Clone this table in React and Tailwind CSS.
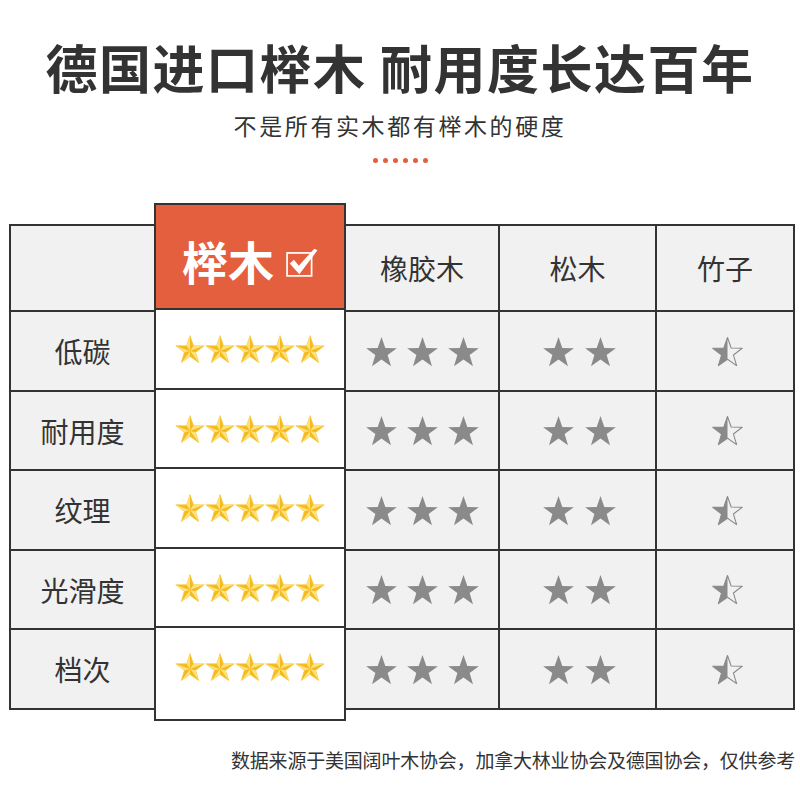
// App.jsx — beech wood comparison chart

const FONT = { fontFamily: '"Noto Sans CJK SC", "Noto Sans", sans-serif' }

const OUTER = [
  [50, 0],
  [97.55, 34.55],
  [79.39, 90.45],
  [20.61, 90.45],
  [2.45, 34.55],
]
const INNER = [
  [61.76, 33.82],
  [69.02, 56.18],
  [50, 70],
  [30.98, 56.18],
  [38.24, 33.82],
]
const STAR_POINTS = OUTER.flatMap((p, i) => [p, INNER[i]])
  .map(p => p.join(','))
  .join(' ')

function GoldStar() {
  const c = [50, 52]
  return (
    <svg viewBox="0 -4 100 98" className="w-[30px] h-[30px]">
      <polygon points={STAR_POINTS} fill="#f7c230" />
      {OUTER.map((o, i) => {
        const left = INNER[(i + 4) % 5]
        const right = INNER[i]
        return (
          <g key={i}>
            <polygon points={`${c.join(',')} ${left.join(',')} ${o.join(',')}`} fill="#fde37c" />
            <polygon points={`${c.join(',')} ${o.join(',')} ${right.join(',')}`} fill="#f5b921" />
          </g>
        )
      })}
      <polygon points={STAR_POINTS} fill="none" stroke="#fcd45a" strokeWidth="2" strokeLinejoin="round" />
    </svg>
  )
}

function GreyStar() {
  return (
    <svg viewBox="0 -3 100 96" className="w-[33px] h-[31px]">
      <polygon points={STAR_POINTS} fill="#8a8a8a" />
    </svg>
  )
}

function HalfStar() {
  const left = '50,0 38.24,33.82 2.45,34.55 30.98,56.18 20.61,90.45 50,70'
  return (
    <svg viewBox="-3 -5 106 100" className="w-[33px] h-[31px]">
      <polygon points={left} fill="#8a8a8a" />
      <polygon points={STAR_POINTS} fill="none" stroke="#8a8a8a" strokeWidth="3.5" strokeLinejoin="round" />
    </svg>
  )
}

function CheckBox() {
  return (
    <svg viewBox="0 0 30 30" className="w-[32px] h-[32px]">
      <rect x="1" y="6.5" width="23" height="21.5" fill="none" stroke="#fff" strokeWidth="1.6" />
      <polygon points="3.5,16.5 7.5,13 12,18.5 26.5,2.5 29.5,4 12.5,26.5" fill="#fff" />
    </svg>
  )
}

const ROWS = ['低碳', '耐用度', '纹理', '光滑度', '档次']
const ROW_H = ['h-[80px]', 'h-[79px]', 'h-[80px]', 'h-[79px]', 'h-[80px]']

function PlainColumn({ width, title, children }) {
  return (
    <div className={`mt-[21px] flex flex-col border-t-2 border-r-2 border-[#333] ${width}`}>
      <div className="h-[86px] border-b-2 border-[#333] bg-[#f1f1f1] flex items-center justify-center text-[28px] text-[#333]">
        {title}
      </div>
      {ROWS.map((r, i) => (
        <div
          key={r}
          className={`${ROW_H[i]} border-b-2 border-[#333] bg-[#f1f1f1] flex items-center justify-center`}
        >
          {children(r, i)}
        </div>
      ))}
    </div>
  )
}

export default function App() {
  return (
    <main className="w-[800px] h-[800px] bg-white flex flex-col text-[#333]" style={FONT}>
      <h1 className="pt-[41px] text-center text-[52px] leading-[52px] tracking-[1.5px] font-bold text-[#333]">
        德国进口榉木 耐用度长达百年
      </h1>
      <p className="mt-[20px] text-center text-[23px] leading-[24px] tracking-[2.6px] text-[#333]">
        不是所有实木都有榉木的硬度
      </p>
      <div className="mt-[21px] flex justify-center gap-[5px]">
        {[0, 1, 2, 3, 4, 5].map(i => (
          <span key={i} className="w-[5px] h-[5px] rounded-full bg-[#e35f3e]" />
        ))}
      </div>

      {/* Table */}
      <div className="mt-[40px] ml-[9px] flex items-start">
        <div className="mt-[21px] w-[145px] flex flex-col border-t-2 border-l-2 border-[#333]">
          <div className="h-[86px] border-b-2 border-[#333] bg-[#f1f1f1]" />
          {ROWS.map((r, i) => (
            <div
              key={r}
              className={`${ROW_H[i]} border-b-2 border-[#333] bg-[#f1f1f1] flex items-center justify-center text-[28px]`}
            >
              {r}
            </div>
          ))}
        </div>

        {/* Beech column */}
        <div className="w-[192px] flex flex-col border-2 border-[#333]">
          <div className="h-[105px] border-b-2 border-[#333] bg-[#e35f3e] flex items-center justify-center gap-[12px] pt-[6px]">
            <span className="text-[46px] leading-[46px] font-bold text-white">榉木</span>
            <span className="mt-[4px]"><CheckBox /></span>
          </div>
          {ROWS.map((r, i) => (
            <div
              key={r}
              className={`${i === 4 ? 'h-[91px] pb-[13px]' : `${ROW_H[i]} border-b-2 border-[#333]`} bg-white flex items-center justify-center`}
            >
              {[0, 1, 2, 3, 4].map(k => (
                <GoldStar key={k} />
              ))}
            </div>
          ))}
        </div>

        <PlainColumn width="w-[154px]" title="橡胶木">
          {() => (
            <div className="flex gap-[8px]">
              <GreyStar />
              <GreyStar />
              <GreyStar />
            </div>
          )}
        </PlainColumn>
        <PlainColumn width="w-[157px]" title="松木">
          {() => (
            <div className="flex gap-[9px] ml-[3px]">
              <GreyStar />
              <GreyStar />
            </div>
          )}
        </PlainColumn>
        <PlainColumn width="w-[138px]" title="竹子">
          {() => (
            <div className="ml-[5px]">
              <HalfStar />
            </div>
          )}
        </PlainColumn>
      </div>

      <p className="mt-[29px] pr-[5px] text-right text-[19px] leading-[19px] tracking-[-0.2px] text-[#333]">
        数据来源于美国阔叶木协会，加拿大林业协会及德国协会，仅供参考
      </p>
    </main>
  )
}
